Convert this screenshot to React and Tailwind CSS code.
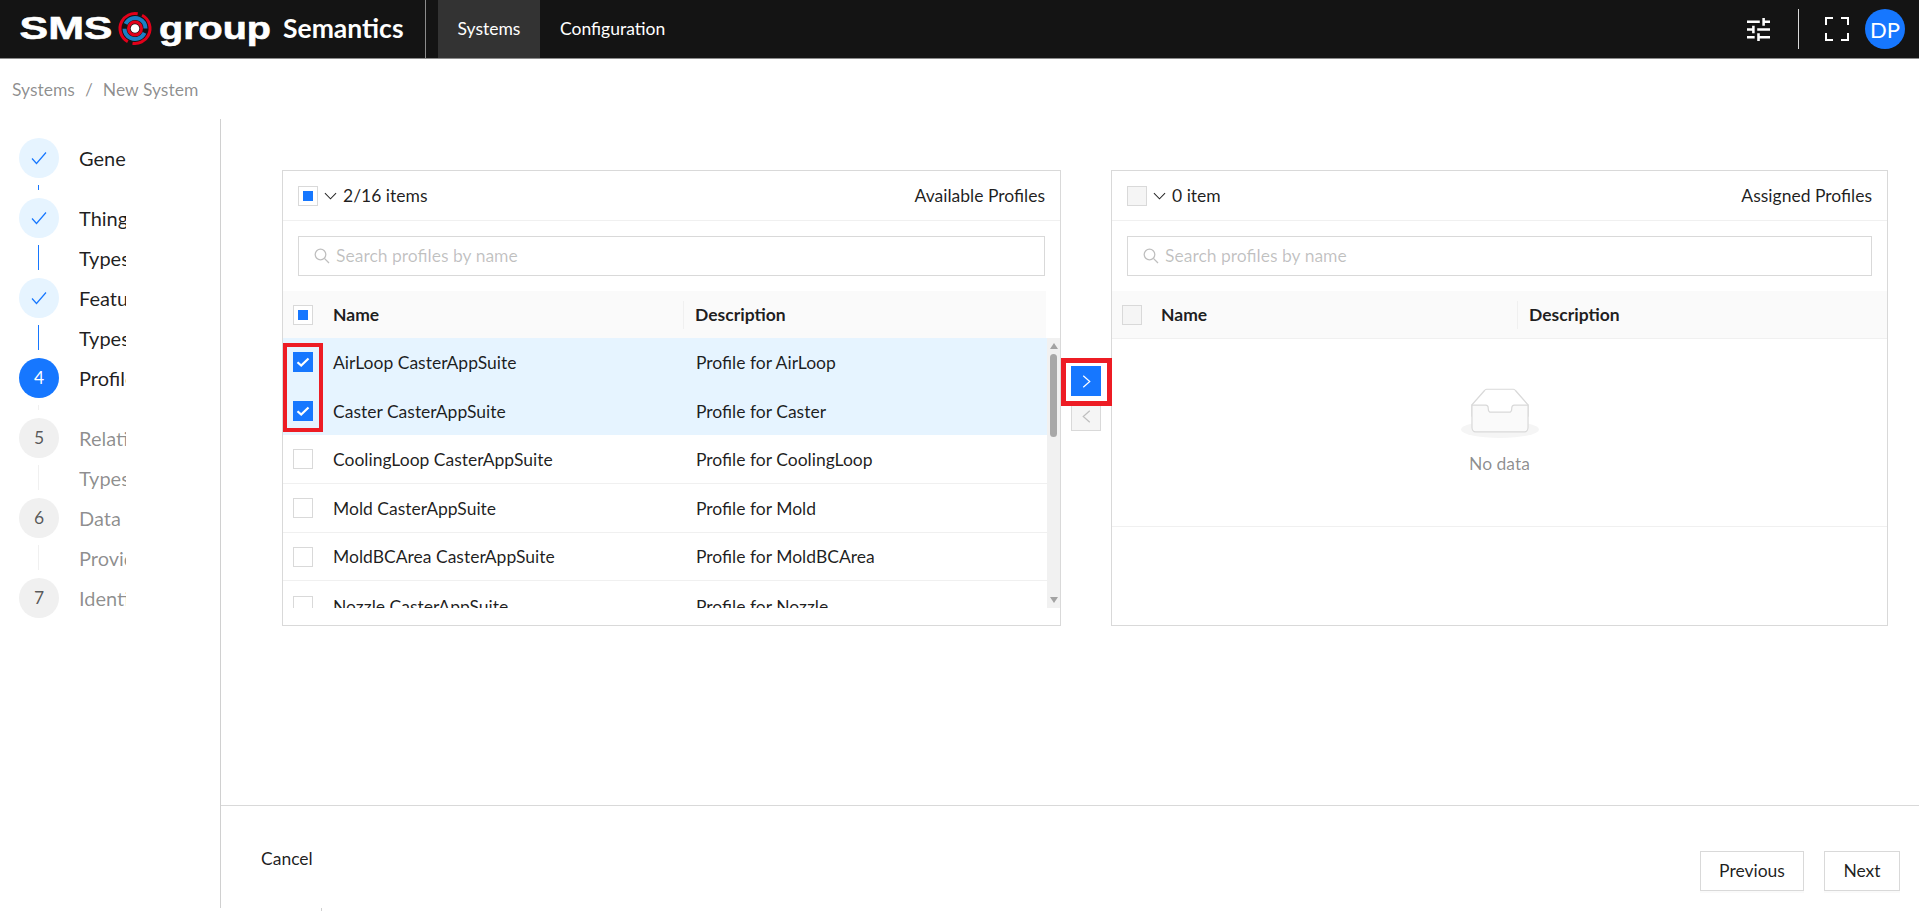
const font = { fontFamily: 'Lato, "Noto Sans", sans-serif' };

function Logo() {
  return (
    <svg width="280" height="58" viewBox="0 0 280 58" className="shrink-0">
      <text x="19.5" y="39" fontFamily="'Liberation Sans', sans-serif" fontWeight="700" fontSize="32" fill="#fff" stroke="#fff" strokeWidth="0.6" textLength="93" lengthAdjust="spacingAndGlyphs">SMS</text>
      <circle cx="135" cy="28.5" r="15" fill="none" stroke="#e2001a" strokeWidth="3" strokeDasharray="42 5 42 5" transform="rotate(-62 135 28.5)" />
      <circle cx="135" cy="28.5" r="10.5" fill="none" stroke="#1b7fc4" strokeWidth="4" strokeDasharray="28 5 28 5" transform="rotate(25 135 28.5)" />
      <circle cx="135" cy="28.5" r="6.5" fill="none" stroke="#e2001a" strokeWidth="3" />
      <circle cx="135" cy="28.5" r="4.3" fill="#fff" />
      <text x="159" y="39" fontFamily="'Liberation Sans', sans-serif" fontWeight="700" fontSize="32" fill="#fff" stroke="#fff" strokeWidth="0.6" textLength="112" lengthAdjust="spacingAndGlyphs">group</text>
    </svg>
  );
}

function Check({ className }) {
  return (
    <svg viewBox="0 0 16 16" className={className} fill="none" stroke="currentColor">
      <path d="M1 8.5 L5.5 13.5 L15 2.5" strokeWidth="1.2" />
    </svg>
  );
}

function Step({ state, num, title, sub, short }) {
  const circle =
    state === "done"
      ? "bg-[#e6f4ff] text-[#1677ff]"
      : state === "active"
        ? "bg-[#1677ff] text-white"
        : "bg-[#f0f0f0] text-[#000000a6]";
  const line = state === "done" ? "bg-[#1677ff]" : "bg-[#f0f0f0]";
  const text = state === "pending" ? "text-[#00000073]" : "text-[#000000e0]";
  return (
    <div className={`flex gap-[20px] ${num === 7 ? "h-[40px]" : short ? "h-[60px]" : "h-[80px]"}`}>
      <div className="flex flex-col items-start w-[40px] shrink-0">
        <div className={`w-[40px] h-[40px] rounded-full flex items-center justify-center ${circle}`}>
          {state === "done" ? <Check className="w-[16px] h-[16px]" /> : num}
        </div>
        {num !== 7 && <div className={`w-px ml-[19px] mt-[7px] ${short ? "h-[5px]" : "h-[25px]"} ${line}`} />}
      </div>
      <div className={`w-[47px] overflow-hidden whitespace-nowrap text-[20px] ${text}`}>
        <div className="h-[40px] flex items-center">{title}</div>
        {sub && <div className="h-[40px] flex items-center">{sub}</div>}
      </div>
    </div>
  );
}

function SearchIcon() {
  return (
    <svg viewBox="0 0 16 16" className="w-[16px] h-[16px] shrink-0 text-[#bfbfbf]" fill="none" stroke="currentColor" strokeWidth="1.3">
      <circle cx="6.5" cy="6.5" r="5.3" />
      <path d="M10.4 10.4 L15 15" />
    </svg>
  );
}

function Box({ kind, className = "" }) {
  if (kind === "checked")
    return (
      <span className={`w-[20px] h-[20px] shrink-0 bg-[#1677ff] flex items-center justify-center ${className}`}>
        <svg viewBox="0 0 14 12" className="w-[14px] h-[12px]" fill="none" stroke="#fff" strokeWidth="2.2">
          <path d="M1.5 6.2 L5.2 9.6 L12.5 2.5" />
        </svg>
      </span>
    );
  if (kind === "mixed")
    return (
      <span className={`w-[20px] h-[20px] shrink-0 border border-[#d9d9d9] bg-white flex items-center justify-center ${className}`}>
        <span className="w-[10px] h-[10px] bg-[#1677ff]" />
      </span>
    );
  if (kind === "disabled")
    return <span className={`w-[20px] h-[20px] shrink-0 border border-[#d9d9d9] bg-[#f5f5f5] ${className}`} />;
  return <span className={`w-[20px] h-[20px] shrink-0 border border-[#d9d9d9] bg-white ${className}`} />;
}

function Chevron() {
  return (
    <svg viewBox="0 0 14 8" className="w-[13px] h-[8px] shrink-0 text-[#000000d9]" fill="none" stroke="currentColor" strokeWidth="1.1">
      <path d="M1 1 L7 7 L13 1" />
    </svg>
  );
}

function Row({ name, desc, selected, last }) {
  return (
    <div className={`flex items-center h-[48.7px] shrink-0 ${selected ? "bg-[#e6f4ff]" : last ? "" : "border-b border-[#f0f0f0]"}`}>
      <div className="w-[50px] pl-[10px] shrink-0 flex">
        <Box kind={selected ? "checked" : "empty"} />
      </div>
      <div className="w-[363px] shrink-0 pt-[2px]">{name}</div>
      <div className="pt-[2px]">{desc}</div>
    </div>
  );
}

function Panel({ width, boxKind, count, title, children }) {
  return (
    <div className={`${width} h-[456px] shrink-0 border border-[#d9d9d9] flex flex-col bg-white text-[#000000e0]`}>
      <div className="h-[50px] shrink-0 border-b border-[#f0f0f0] flex items-center justify-between px-[15px]">
        <div className="flex items-center">
          <Box kind={boxKind} />
          <span className="ml-[6px]"><Chevron /></span>
          <span className="ml-[6px] pt-[1px]">{count}</span>
        </div>
        <span className="pt-[1px]">{title}</span>
      </div>
      <div className="px-[15px] pt-[15px] pb-[15px] shrink-0">
        <div className="h-[40px] border border-[#d9d9d9] flex items-center px-[15px] gap-[6px] text-[#00000040]">
          <SearchIcon />
          <span className="pt-[1px]">Search profiles by name</span>
        </div>
      </div>
      {children}
    </div>
  );
}

function HeadRow({ boxKind, nameW, sepClass, className = "" }) {
  return (
    <div className={`shrink-0 bg-[#fafafa] flex items-center font-bold ${className}`}>
      <div className={`${nameW} pl-[10px] shrink-0 flex`}>
        <Box kind={boxKind} />
      </div>
      <div className={`${sepClass} shrink-0 h-full flex items-center`}>
        <span className="flex-1 pt-[2px]">Name</span>
        <span className="w-px h-[28px] bg-[#f0f0f0]" />
      </div>
      <span className="pl-[11px] pt-[2px]">Description</span>
    </div>
  );
}

export default function App() {
  return (
    <div style={font} className="w-[1919px] h-[911px] overflow-hidden flex flex-col bg-white text-[17.5px] relative">
      <header className="h-[59px] shrink-0 bg-[#141414] border-b border-[#8c8c8c] flex items-stretch text-white">
        <Logo />
        <div className="w-[145px] shrink-0 flex items-center text-[26.5px] font-bold">
          <span className="ml-[3px]">Semantics</span>
        </div>
        <div className="w-px bg-[#8c8c8c] shrink-0" />
        <nav className="flex ml-[12px]">
          <div className="w-[102px] bg-[#333333] flex items-center justify-center">Systems</div>
          <div className="ml-[20px] flex items-center">Configuration</div>
        </nav>
        <div className="ml-auto flex items-center pr-[14px]">
          <svg viewBox="3 3 18 18" className="w-[23px] h-[23px]" fill="#fff">
            <path d="M3 17v2h6v-2H3zM3 5v2h10V5H3zm10 16v-2h8v-2h-8v-2h-2v6h2zM7 9v2H3v2h4v2h2V9H7zm14 4v-2H11v2h10zm-6-4h2V7h4V5h-4V3h-2v6z" />
          </svg>
          <div className="w-px h-[40px] bg-[#d9d9d9] ml-[28px]" />
          <svg viewBox="0 0 24 24" className="w-[24px] h-[24px] ml-[26px]" fill="none" stroke="#fff" strokeWidth="2">
            <path d="M1 8V1h7M16 1h7v7M23 16v7h-7M8 23H1v-7" />
          </svg>
          <div className="w-[40px] h-[40px] rounded-full bg-[#1677ff] flex items-center justify-center text-[22px] ml-[16px]">DP</div>
        </div>
      </header>

      <div className="h-[60px] shrink-0 pl-[12px] pt-[2px] flex items-center text-[#00000073]">
        <span>Systems</span>
        <span className="mx-[10px]">/</span>
        <span>New System</span>
      </div>

      <div className="h-[789px] shrink-0 flex">
        <aside className="w-[221px] shrink-0 border-r border-[#d0d0d0] pl-[19px] pt-[19px]">
          <Step state="done" num={1} title="General" short />
          <Step state="done" num={2} title="Things" sub="Types" />
          <Step state="done" num={3} title="Features" sub="Types" />
          <Step state="active" num={4} title="Profiles" short />
          <Step state="pending" num={5} title="Relationships" sub="Types" />
          <Step state="pending" num={6} title="Data" sub="Providers" />
          <Step state="pending" num={7} title="Identity" />
        </aside>

        <main className="flex-1 flex flex-col">
          <div className="h-[686px] shrink-0 pl-[61px] pt-[51px] flex items-start relative">
            <Panel width="w-[779px]" boxKind="mixed" count="2/16 items" title="Available Profiles">
              <div className="flex-1 flex flex-col relative">
                <HeadRow boxKind="mixed" nameW="w-[50px]" sepClass="w-[351px]" className="mr-[14px] h-[47px]" />
                <div className="h-[270px] flex relative">
                  <div className="flex-1 overflow-hidden flex flex-col">
                    <Row selected name="AirLoop CasterAppSuite" desc="Profile for AirLoop" />
                    <Row selected name="Caster CasterAppSuite" desc="Profile for Caster" />
                    <Row name="CoolingLoop CasterAppSuite" desc="Profile for CoolingLoop" />
                    <Row name="Mold CasterAppSuite" desc="Profile for Mold" />
                    <Row name="MoldBCArea CasterAppSuite" desc="Profile for MoldBCArea" />
                    <Row name="Nozzle CasterAppSuite" desc="Profile for Nozzle" last />
                  </div>
                  <div className="w-[13px] shrink-0 bg-[#f1f1f1] flex flex-col items-center relative">
                    <svg viewBox="0 0 8 6" className="w-[8px] h-[6px] mt-[5px] text-[#a3a3a3]" fill="currentColor"><path d="M4 0 L8 6 H0 Z" /></svg>
                    <div className="w-[7px] h-[83px] mt-[5px] rounded-full bg-[#a8a8a8]" />
                    <svg viewBox="0 0 8 6" className="w-[8px] h-[6px] mt-auto mb-[5px] text-[#a3a3a3]" fill="currentColor"><path d="M4 6 L8 0 H0 Z" /></svg>
                  </div>
                </div>
              </div>
            </Panel>

            <div className="w-[50px] h-[456px] shrink-0 flex flex-col items-start pl-[10px] pt-[196px] gap-[5px]">
              <div className="w-[30px] h-[30px] bg-[#1677ff] flex items-center justify-center">
                <svg viewBox="0 0 10 16" className="w-[9px] h-[13px]" fill="none" stroke="#fff" strokeWidth="1.5"><path d="M1 1 L9 8 L1 15" /></svg>
              </div>
              <div className="w-[30px] h-[30px] bg-[#f5f5f5] border border-[#d9d9d9] flex items-center justify-center">
                <svg viewBox="0 0 10 16" className="w-[9px] h-[13px]" fill="none" stroke="#bfbfbf" strokeWidth="1.5"><path d="M9 1 L1 8 L9 15" /></svg>
              </div>
            </div>

            <Panel width="w-[777px]" boxKind="disabled" count="0 item" title="Assigned Profiles">
              <HeadRow boxKind="disabled" nameW="w-[49px]" sepClass="w-[357px]" className="h-[48px] border-b border-[#f0f0f0]" />
              <div className="h-[188px] shrink-0 border-b border-[#f0f0f0] flex flex-col items-center pt-[49px]">
                <svg width="78" height="50" viewBox="0 0 64 41">
                  <g transform="translate(0 1)" fill="none" fillRule="evenodd">
                    <ellipse fill="#f5f5f5" cx="32" cy="33" rx="32" ry="7" />
                    <g fillRule="nonzero" stroke="#d9d9d9">
                      <path d="M55 12.76L44.854 1.258C44.367.474 43.656 0 42.907 0H21.093c-.749 0-1.46.474-1.947 1.257L9 12.761V22h46v-9.24z" />
                      <path d="M41.613 15.931c0-1.605.994-2.93 2.227-2.931H55v18.137C55 33.26 53.68 35 52.05 35h-40.1C10.32 35 9 33.259 9 31.137V13h11.16c1.233 0 2.227 1.323 2.227 2.928v.022c0 1.605 1.005 2.901 2.237 2.901h14.752c1.232 0 2.237-1.308 2.237-2.913v-.007z" fill="#fafafa" />
                    </g>
                  </g>
                </svg>
                <span className="mt-[13px] text-[#00000073]">No data</span>
              </div>
            </Panel>

            <div className="absolute left-[62px] top-[224px] w-[40px] h-[89px] border-[4px] border-[#ed1c24]" />
            <div className="absolute left-[840px] top-[239px] w-[51px] h-[48px] border-[5px] border-[#ed1c24]" />
          </div>

          <footer className="h-[103px] shrink-0 border-t border-[#d9d9d9] flex items-start justify-between">
            <span className="ml-[40px] mt-[40px] text-[#000000e0]">Cancel</span>
            <div className="flex gap-[20px] mt-[45px] mr-[19px] text-[#000000e0]">
              <div className="w-[104px] h-[40px] border border-[#d9d9d9] flex items-center justify-center shadow-[0_2px_0_rgba(0,0,0,0.02)]">Previous</div>
              <div className="w-[76px] h-[40px] border border-[#d9d9d9] flex items-center justify-center shadow-[0_2px_0_rgba(0,0,0,0.02)]">Next</div>
            </div>
          </footer>
        </main>
      </div>

      <div className="flex-1 relative">
        <div className="absolute left-[321px] top-0 w-px h-[3px] bg-[#d0d0d0]" />
      </div>
    </div>
  );
}
